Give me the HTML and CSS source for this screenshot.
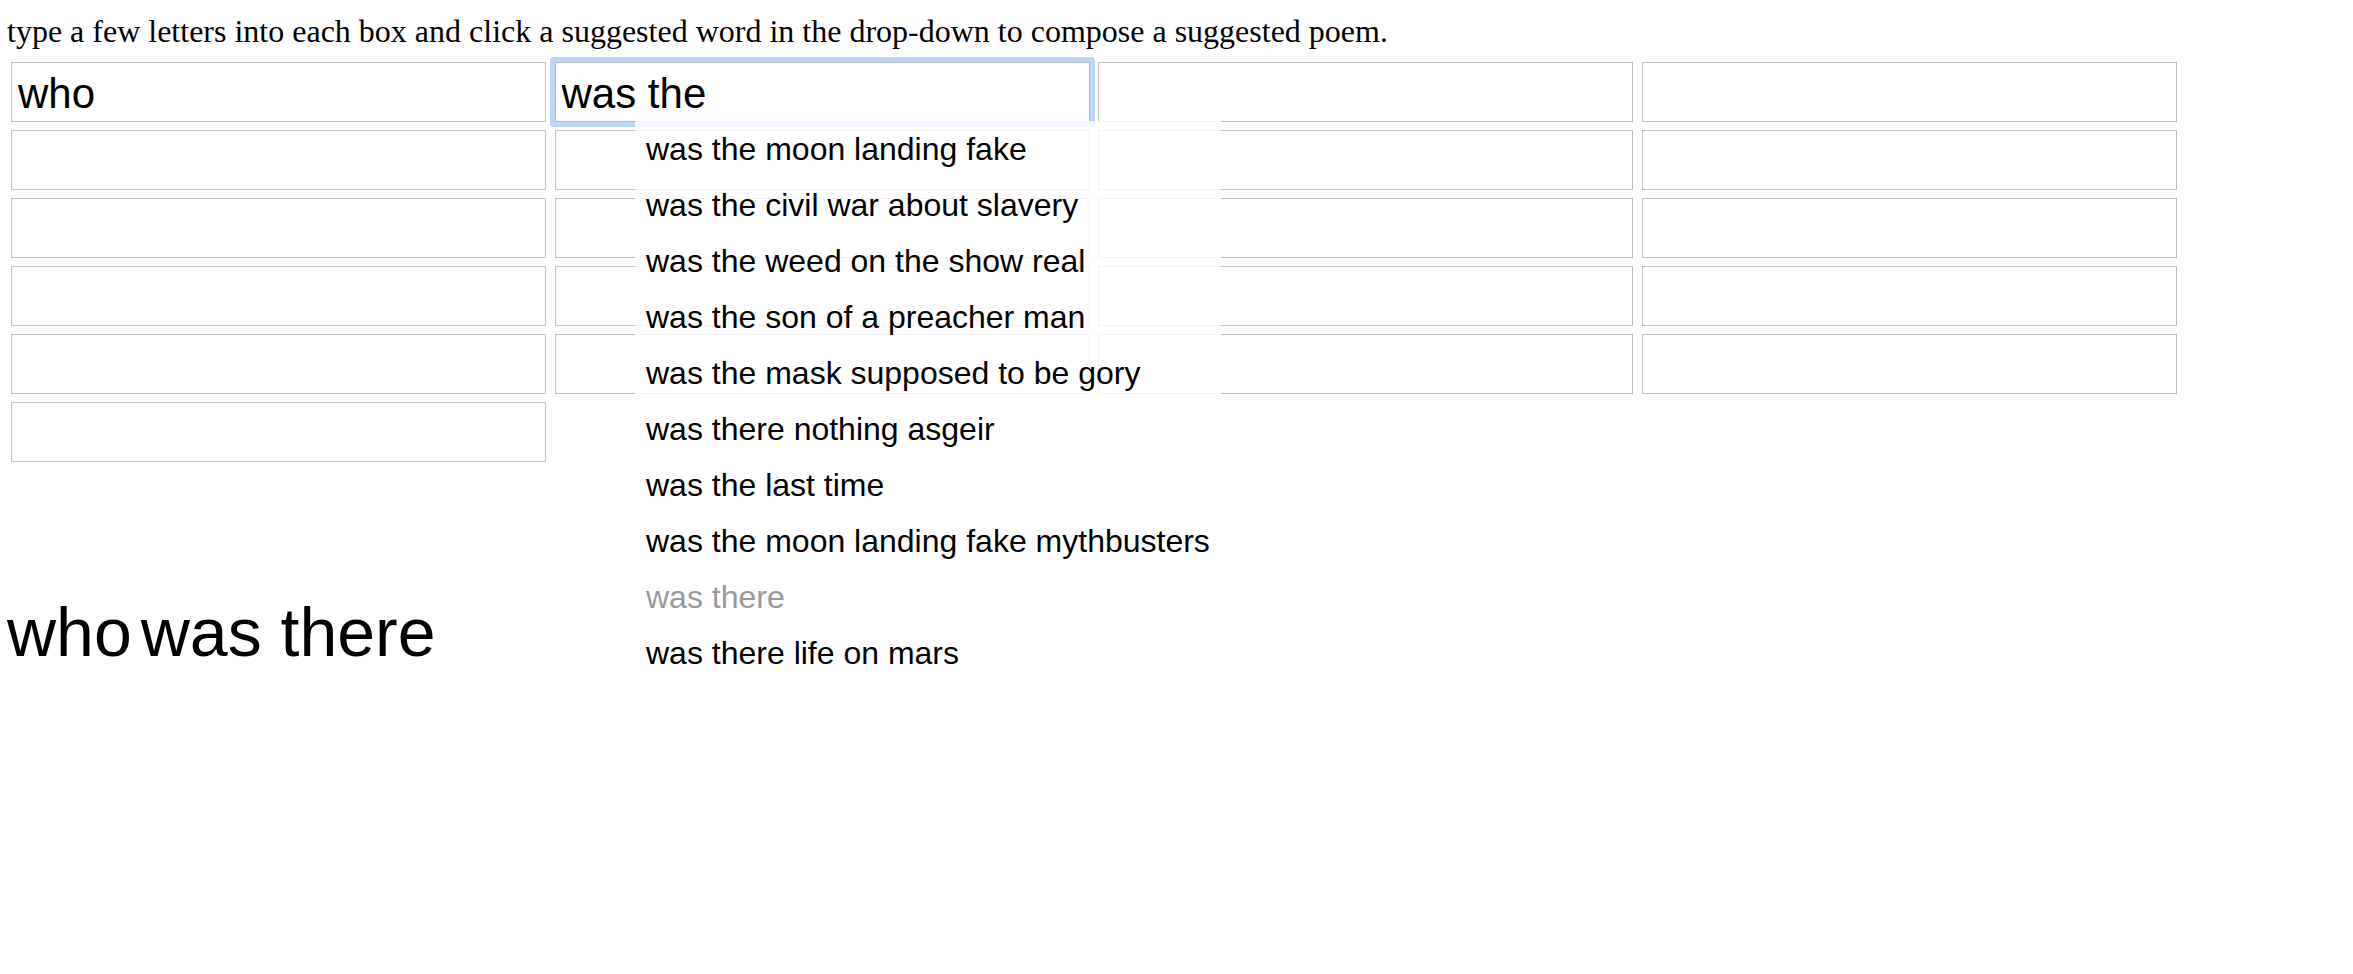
FILE: index.html
```html
<!DOCTYPE html>
<html lang="en">
<head>
    <meta charset="UTF-8">
    <meta name="viewport" content="width=device-width, initial-scale=1.0">
    <title>Suggested Poem</title>
    <link rel="stylesheet" href="styles.css">
</head>
<body>

    <div class="intro">type a few letters into each box and click a suggested word in the drop-down to compose a suggested poem.</div>

    <div class="boxes">
        <input type="text" class="word" value="who">
        <input type="text" class="word active" value="was the">
        <input type="text" class="word">
        <input type="text" class="word">

        <input type="text" class="word">
        <input type="text" class="word">
        <input type="text" class="word">
        <input type="text" class="word">

        <input type="text" class="word">
        <input type="text" class="word">
        <input type="text" class="word">
        <input type="text" class="word">

        <input type="text" class="word">
        <input type="text" class="word">
        <input type="text" class="word">
        <input type="text" class="word">

        <input type="text" class="word">
        <input type="text" class="word">
        <input type="text" class="word">
        <input type="text" class="word">

        <input type="text" class="word">

        <ul class="suggestions">
            <li>was the moon landing fake</li>
            <li>was the civil war about slavery</li>
            <li>was the weed on the show real</li>
            <li>was the son of a preacher man</li>
            <li>was the mask supposed to be gory</li>
            <li>was there nothing asgeir</li>
            <li>was the last time</li>
            <li>was the moon landing fake mythbusters</li>
            <li class="picked">was there</li>
            <li>was there life on mars</li>
        </ul>
    </div>

    <div class="poem">
        <span>who</span>
        <span>was there</span>
    </div>

</body>
</html>
```

FILE: styles.css
```css
body {
    margin: 0;
    background: white;
    color: black;
}
.intro {
    font-family: "Liberation Serif", "Times New Roman", serif;
    font-size: 32px;
    line-height: 37px;
    margin: 13px 0 12px 7px;
}
.boxes {
    position: relative;
    display: grid;
    grid-template-columns: repeat(4, 535px);
    grid-auto-rows: 60px;
    column-gap: 8.5px;
    row-gap: 8px;
    padding-left: 11px;
}
.word {
    box-sizing: border-box;
    width: 100%;
    height: 60px;
    margin: 0;
    padding: 3px 6px 0;
    border: 1px solid #c2c2c2;
    border-radius: 0;
    font-family: "Liberation Sans", Arial, sans-serif;
    font-size: 42px;
    color: black;
    background: white;
}
.word:focus {
    outline: none;
}
.active {
    border-radius: 1px;
    border-color: #b5b5b5;
    box-shadow: 0 0 0 5px #bcd8f6;
}
.suggestions {
    position: absolute;
    top: 58.5px;
    left: 635px;
    width: 586px;
    margin: 0;
    padding: 0;
    list-style: none;
    background: rgba(255, 255, 255, 0.82);
    z-index: 2;
    font-family: "Liberation Sans", Arial, sans-serif;
    font-size: 32px;
}
.suggestions li {
    height: 56px;
    line-height: 56px;
    padding-left: 11px;
    white-space: nowrap;
}
.suggestions .picked {
    color: #999;
}
.poem {
    display: flex;
    gap: 9px;
    margin: 131px 0 0 7px;
    font-family: "Liberation Sans", Arial, sans-serif;
    font-size: 68px;
}
```
